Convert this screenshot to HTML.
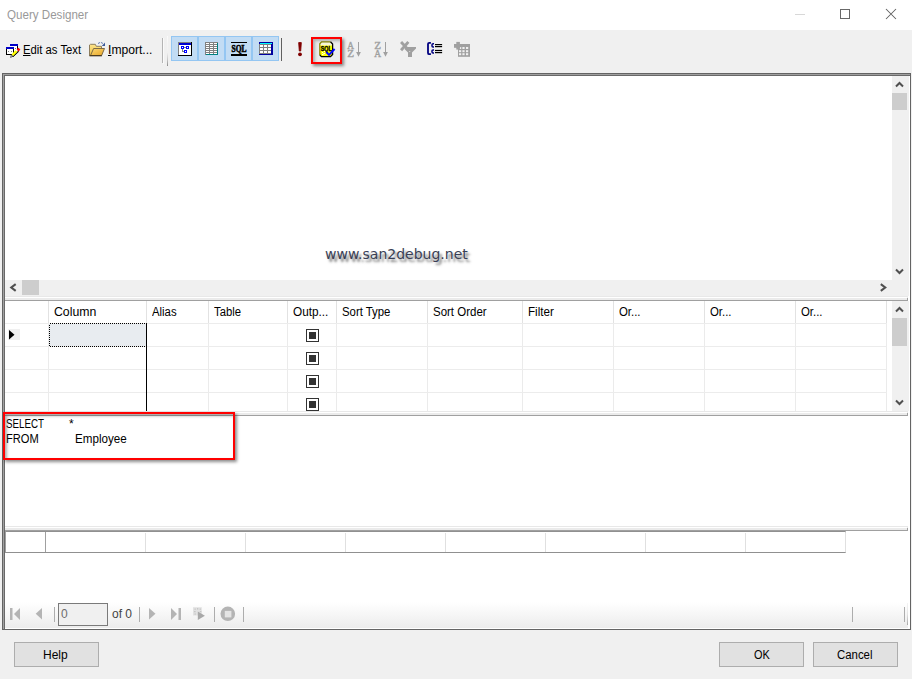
<!DOCTYPE html>
<html><head><meta charset="utf-8"><title>Query Designer</title>
<style>
*{box-sizing:border-box;margin:0;padding:0}
html,body{width:912px;height:679px;overflow:hidden;background:#f0f0f0}
body{position:relative;font-family:"Liberation Sans",sans-serif;font-size:12px;color:#000}
.a{position:absolute}
.t{position:absolute;white-space:nowrap;line-height:14px;height:14px;transform-origin:0 50%}
svg{position:absolute;overflow:visible}
.px{shape-rendering:crispEdges}
#title{left:0;top:0;width:912px;height:30px;background:#fff}
.btn{position:absolute;height:25px;top:642px;width:85px;background:#e1e1e1;border:1px solid #adadad}
.vl{position:absolute;width:1px;background:linear-gradient(#e2e2e2 0,#e2e2e2 22px,#ebebeb 22px)}
.hl{position:absolute;height:1px;background:#ececec}
.sep{position:absolute;width:1px;background:#adadad}
</style></head><body>
<!-- TITLE BAR -->
<div id="title" class="a"></div>
<div class="t" id="t_title" style="left:7px;top:8px;color:#999;transform:scaleX(0.966)">Query Designer</div>
<svg class="px" style="left:790px;top:0" width="122" height="30">
<rect x="5" y="14" width="10" height="1" fill="#d8d8d8"/>
<rect x="50.5" y="9.5" width="9" height="9" fill="none" stroke="#686868" stroke-width="1"/>
</svg>
<svg style="left:885px;top:8px" width="12" height="12"><path d="M1 1 L11 11 M11 1 L1 11" stroke="#606060" stroke-width="1.05" fill="none"/></svg>

<!-- TOOLBAR -->
<svg class="px" style="left:6px;top:43px" width="15" height="15">
<rect x="4" y="1" width="8" height="8" fill="#fff"/><rect x="4" y="1" width="8" height="2" fill="#0000c8"/><rect x="11" y="3" width="1" height="3" fill="#000"/>
<rect x="0" y="4" width="8" height="8" fill="#fff"/><rect x="0" y="4" width="8" height="2" fill="#0000c8"/><rect x="0" y="6" width="1" height="6" fill="#000"/><rect x="0" y="11" width="6" height="1" fill="#000"/><rect x="7" y="6" width="1" height="4" fill="#000"/>
<rect x="2" y="8" width="1" height="1" fill="#808080"/><rect x="5" y="8" width="1" height="1" fill="#808080"/><rect x="9" y="5" width="1" height="1" fill="#808080"/>
</svg>
<svg style="left:6px;top:43px" width="16" height="16">
<path d="M7.3 13.6 L12.6 8.6 L11.5 8.8 L7 13 Z" fill="#000" stroke="#000" stroke-width=".9"/>
<path d="M5.5 11.6 L9.4 7.2 L11.5 8.8 L7.3 13 Z" fill="#ff0"/>
<path d="M10.6 6.2 L12.6 4.7 L14.4 6.7 L12.3 8.6 Z" fill="#f00"/>
<path d="M5.4 11.8 L7 13.3 L4.6 14.4 Z" fill="#fff" stroke="#000" stroke-width=".6"/>
</svg>
<div class="t" id="tb_edit" style="left:23px;top:43px;font-size:12px;transform:scaleX(0.94)"><u>E</u>dit as Text</div>
<svg style="left:88px;top:40px" width="19" height="18">
<defs><linearGradient id="fg1" x1="0" y1="0" x2="0" y2="1"><stop offset="0" stop-color="#fde58c"/><stop offset="1" stop-color="#f0c040"/></linearGradient>
<linearGradient id="fg2" x1="0" y1="0" x2="1" y2="1"><stop offset="0" stop-color="#fdd975"/><stop offset="1" stop-color="#e7a526"/></linearGradient></defs>
<path d="M1.5 15.5 L1.5 5 L2.5 4.3 L7.3 4.3 L8.3 6.3 L13.5 6.3 L13.5 15.5 Z" fill="url(#fg1)" stroke="#8d7d5c" stroke-width="1"/>
<path d="M2.5 15.5 L5.6 8.5 L16.5 8.5 L13.6 15.5 Z" fill="url(#fg2)" stroke="#7d6a45" stroke-width="1"/>
<path d="M1.5 15.8 L13.8 15.8" stroke="#3a2a10" stroke-width="1"/>
<path d="M10 3.6 Q13 1.2 15.6 4.2" fill="none" stroke="#5a78b0" stroke-width="1" stroke-dasharray="2.2 1"/>
<path d="M17 2.6 L17 5.9 L13.8 5.9 Z" fill="#3a5a9a"/>
</svg>
<div class="t" id="tb_imp" style="left:108px;top:43px;font-size:12px;transform:scaleX(1.01)"><u>I</u>mport...</div>
<div class="a" style="left:162px;top:38px;width:1px;height:25px;background:#b4b4b4"></div><div class="a" style="left:163px;top:38px;width:1px;height:26px;background:#fafafa"></div><div class="a" style="left:167px;top:36px;width:1px;height:30px;background:linear-gradient(#fafafa 0%,#f0f0f0 55%,#c4c4c4 80%,#8c8c8c 100%)"></div>
<div class="a" style="left:281px;top:38px;width:1px;height:23px;background:#606060"></div>
<div class="a" style="left:171px;top:36px;width:27px;height:25px;background:#c2dcf4;border:1px solid #94c6f2"></div>
<div class="a" style="left:198px;top:36px;width:27px;height:25px;background:#c2dcf4;border:1px solid #94c6f2"></div>
<div class="a" style="left:225px;top:36px;width:27px;height:25px;background:#c2dcf4;border:1px solid #94c6f2"></div>
<div class="a" style="left:252px;top:36px;width:27px;height:25px;background:#c2dcf4;border:1px solid #94c6f2"></div>
<svg class="px" style="left:178px;top:42px" width="14" height="14">
<rect x="0" y="0" width="14" height="14" fill="#000"/><rect x="0" y="0" width="13" height="13" fill="#808080"/><rect x="1" y="1" width="12" height="12" fill="#fff"/>
<rect x="1" y="1" width="12" height="2" fill="#0000d0"/>
<rect x="5" y="5" width="3" height="1" fill="#808080"/><rect x="4" y="6" width="1" height="4" fill="#808080"/><rect x="4" y="9" width="3" height="1" fill="#808080"/>
<rect x="3" y="4" width="3" height="3" fill="#00f"/><rect x="4" y="5" width="1" height="1" fill="#fff"/>
<rect x="8" y="4" width="3" height="3" fill="#00f"/><rect x="9" y="5" width="1" height="1" fill="#fff"/>
<rect x="6" y="8" width="3" height="3" fill="#00f"/><rect x="7" y="9" width="1" height="1" fill="#fff"/>
</svg>
<svg class="px" style="left:205px;top:42px" width="13" height="13">
<rect x="0" y="0" width="13" height="13" fill="#808080"/><rect x="12" y="1" width="1" height="12" fill="#008080"/><rect x="1" y="12" width="12" height="1" fill="#008080"/><rect x="1" y="1" width="3" height="1" fill="#fff"/><rect x="1" y="3" width="3" height="1" fill="#fff"/><rect x="1" y="5" width="3" height="1" fill="#fff"/><rect x="1" y="7" width="3" height="1" fill="#fff"/><rect x="1" y="9" width="3" height="1" fill="#fff"/><rect x="1" y="11" width="3" height="1" fill="#fff"/><rect x="5" y="1" width="3" height="1" fill="#fff"/><rect x="5" y="3" width="3" height="1" fill="#fff"/><rect x="5" y="5" width="3" height="1" fill="#fff"/><rect x="5" y="7" width="3" height="1" fill="#fff"/><rect x="5" y="9" width="3" height="1" fill="#fff"/><rect x="5" y="11" width="3" height="1" fill="#fff"/><rect x="9" y="1" width="3" height="1" fill="#fff"/><rect x="9" y="3" width="3" height="1" fill="#fff"/><rect x="9" y="5" width="3" height="1" fill="#fff"/><rect x="9" y="7" width="3" height="1" fill="#fff"/><rect x="9" y="9" width="3" height="1" fill="#fff"/><rect x="9" y="11" width="3" height="1" fill="#fff"/>
</svg>
<svg style="left:231px;top:41px" width="16" height="16"><rect class="px" x="0" y="1" width="16" height="1" fill="#000"/><rect class="px" x="0" y="13" width="16" height="2" fill="#000"/>
<text x="8" y="11" text-anchor="middle" font-family="Liberation Serif, serif" font-weight="bold" font-size="10" textLength="15" lengthAdjust="spacingAndGlyphs" fill="#000" stroke="#000" stroke-width=".6">SQL</text></svg>
<svg class="px" style="left:259px;top:42px" width="14" height="13">
<rect x="0" y="0" width="14" height="13" fill="#0000a0"/><rect x="1" y="1" width="12" height="1" fill="#0ff"/><rect x="0" y="2" width="12" height="10" fill="#808080"/><rect x="1" y="3" width="3" height="2" fill="#fff"/><rect x="1" y="6" width="3" height="2" fill="#fff"/><rect x="1" y="9" width="3" height="2" fill="#fff"/><rect x="5" y="3" width="3" height="2" fill="#fff"/><rect x="5" y="6" width="3" height="2" fill="#fff"/><rect x="5" y="9" width="3" height="2" fill="#fff"/><rect x="9" y="3" width="3" height="2" fill="#fff"/><rect x="9" y="6" width="3" height="2" fill="#fff"/><rect x="9" y="9" width="3" height="2" fill="#fff"/>
</svg>
<svg style="left:296px;top:41px" width="8" height="17"><path d="M2.7 1.6 L5.3 1.6 L4.7 10 L3.3 10 Z" fill="#800000" stroke="#800000" stroke-width=".9" stroke-linejoin="round"/><circle cx="4" cy="13.3" r="1.9" fill="#800000"/></svg>
<div class="a" style="left:311px;top:37px;width:31px;height:27px;background:#ececec;border:2px solid #f00;box-shadow:2px 2px 3px rgba(0,0,0,.45), inset 2px 2px 3px rgba(60,60,60,.35)"></div>
<svg style="left:319px;top:41px" width="17" height="17">
<path d="M2.5 1 L11.5 1 L13.5 3 L13.5 13.5 L11.5 15.5 L2.5 15.5 L0.8 13.8 L0.8 2.8 Z" fill="#ffff00"/>
<path d="M2.5 1 L11.5 1 L13.4 2.8 L13.4 4.6 L1 4.6 L1 2.8 Z" fill="#f6f6d8"/>
<g fill="#fff"><rect x="3" y="9" width="1" height="1"/><rect x="5" y="10" width="1" height="1"/><rect x="3" y="11" width="1" height="1"/><rect x="5" y="12" width="1" height="1"/><rect x="3" y="13" width="1" height="1"/><rect x="6" y="8.5" width="1" height="1"/><rect x="4" y="12.5" width="1" height="1"/></g>
<path d="M0.8 14 L0.8 2.8 L2.5 0.8 L11.5 0.8" fill="none" stroke="#808000" stroke-width="1.2"/>
<path d="M11.5 0.8 L13.6 3 L13.6 13.5 L11.5 15.6 L2.5 15.6 L0.8 14" fill="none" stroke="#000" stroke-width="1.3"/>
<text x="7.3" y="9.6" text-anchor="middle" font-family="Liberation Sans, sans-serif" font-weight="bold" font-size="6.5" textLength="11" lengthAdjust="spacingAndGlyphs" fill="#000" stroke="#000" stroke-width=".35">SQL</text>
<path d="M7.2 11.2 L10 14 L15.6 8" fill="none" stroke="#0000ff" stroke-width="1.9"/>
</svg>
<svg style="left:347px;top:41px" width="16" height="17">
<text x="0.2" y="7.7" textLength="6.8" lengthAdjust="spacingAndGlyphs" font-family="Liberation Serif, serif" font-size="9.4" fill="#a0a0a0" stroke="#a0a0a0" stroke-width=".35">A</text>
<text x="0.2" y="15.6" textLength="6.8" lengthAdjust="spacingAndGlyphs" font-family="Liberation Serif, serif" font-size="9.4" fill="#a0a0a0" stroke="#a0a0a0" stroke-width=".35">Z</text>
<rect x="11" y="1" width="1" height="11" fill="#a0a0a0"/><path d="M9.1 11 L13.9 11 L11.5 15.8 Z" fill="#a0a0a0"/></svg>
<svg style="left:374px;top:41px" width="16" height="17">
<text x="0.2" y="7.7" textLength="6.8" lengthAdjust="spacingAndGlyphs" font-family="Liberation Serif, serif" font-size="9.4" fill="#a0a0a0" stroke="#a0a0a0" stroke-width=".35">Z</text>
<text x="0.2" y="15.6" textLength="6.8" lengthAdjust="spacingAndGlyphs" font-family="Liberation Serif, serif" font-size="9.4" fill="#a0a0a0" stroke="#a0a0a0" stroke-width=".35">A</text>
<rect x="11" y="1" width="1" height="11" fill="#a0a0a0"/><path d="M9.1 11 L13.9 11 L11.5 15.8 Z" fill="#a0a0a0"/></svg>
<svg style="left:400px;top:41px" width="17" height="17">
<path d="M2 2 L9 9.5 M7.4 2 L2 8.2" stroke="#a0a0a0" stroke-width="2.8" stroke-linecap="square" fill="none"/>
<path d="M6 6 L16 6 L16 7.6 L12 11.4 L12 16 L8 16 L8 11.4 L4.5 8 Z" fill="#a0a0a0"/>
<rect x="9.2" y="10" width="1" height="1" fill="#dcdcdc"/>
</svg>
<svg style="left:427px;top:42px" width="16" height="14">
<path d="M3.9 0.8 L2.3 0.8 Q1 0.8 1 2.1 L1 10.9 Q1 12.2 2.3 12.2 L3.9 12.2" fill="none" stroke="#000080" stroke-width="1.8"/>
<path d="M7 1.8 L6 1.8 Q5 1.8 5 2.7 L5 4 Q5 4.9 6 4.9 L7 4.9" fill="none" stroke="#000080" stroke-width="1.5"/>
<path d="M7 7.9 L6 7.9 Q5 7.9 5 8.8 L5 10.1 Q5 11 6 11 L7 11" fill="none" stroke="#000080" stroke-width="1.5"/>
<g fill="#000"><rect x="8" y="2" width="7.1" height="1.2"/><rect x="8" y="4" width="7.1" height="1.2"/><rect x="8" y="7.9" width="7.1" height="1.2"/><rect x="8" y="10" width="7.1" height="1.2"/></g>
</svg>
<svg style="left:454px;top:41px" width="17" height="17">
<rect x="4" y="3" width="12" height="12.8" fill="#a0a0a0"/><rect x="5" y="6" width="2.2" height="2" fill="#f0f0f0"/><rect x="5" y="9.2" width="2.2" height="2" fill="#f0f0f0"/><rect x="5" y="12.2" width="2.2" height="2" fill="#f0f0f0"/><rect x="8.4" y="6" width="2.2" height="2" fill="#f0f0f0"/><rect x="8.4" y="9.2" width="2.2" height="2" fill="#f0f0f0"/><rect x="8.4" y="12.2" width="2.2" height="2" fill="#f0f0f0"/><rect x="12" y="6" width="2.2" height="2" fill="#f0f0f0"/><rect x="12" y="9.2" width="2.2" height="2" fill="#f0f0f0"/><rect x="12" y="12.2" width="2.2" height="2" fill="#f0f0f0"/>
<rect x="0" y="3" width="6.2" height="3.8" fill="#a0a0a0"/><rect x="2.3" y="0.9" width="3.6" height="7.7" fill="#a0a0a0"/>
</svg>

<!-- MAIN PANE FRAME -->
<div class="a" style="left:2px;top:73px;width:909px;height:557px;background:#646464"></div>
<div class="a" style="left:3px;top:74px;width:907px;height:555px;background:#a0a0a0"></div>
<div class="a" style="left:4px;top:75px;width:906px;height:554px;background:#696969"></div>
<div class="a" style="left:2px;top:73px;width:909px;height:557px;border-right:1px solid #646464;border-bottom:1px solid #646464"></div>
<div class="a" style="left:5px;top:76px;width:905px;height:553px;background:#fff"></div>
<!-- diagram pane scrollbars -->
<div class="a" style="left:892px;top:76px;width:17px;height:220px;background:#f0f0f0"></div>
<div class="a" style="left:5px;top:280px;width:904px;height:16px;background:#f0f0f0"></div>
<div class="a" style="left:892px;top:93px;width:15px;height:17px;background:#cdcdcd"></div>
<div class="a" style="left:22px;top:280px;width:17px;height:15px;background:#cdcdcd"></div>
<svg style="left:892px;top:76px" width="17" height="17"><path d="M4 10.5 L7.5 7 L11 10.5" stroke="#505050" stroke-width="2" fill="none"/></svg>
<svg style="left:892px;top:263px" width="17" height="17"><path d="M4 6.5 L7.5 10 L11 6.5" stroke="#505050" stroke-width="2" fill="none"/></svg>
<svg style="left:5px;top:280px" width="17" height="16"><path d="M10.7 4.2 L6.3 7.5 L10.7 10.8" stroke="#505050" stroke-width="2.1" fill="none"/></svg>
<svg style="left:875px;top:280px" width="17" height="16"><path d="M5.8 4.2 L10.2 7.5 L5.8 10.8" stroke="#505050" stroke-width="2.1" fill="none"/></svg>
<!-- watermark -->
<div class="t" id="t_wm" style="left:325px;top:247px;font-family:'DejaVu Sans',sans-serif;font-size:14px;color:#3a3f55;text-shadow:2.5px 2.5px 2.5px rgba(30,30,30,.6)">www.san2debug.net</div>
<!-- splitter 1 -->
<div class="a" style="left:5px;top:296px;width:903px;height:5px;background:#ebebeb"></div><div class="a" style="left:5px;top:296px;width:903px;height:1px;background:#e8e8e8"></div><div class="a" style="left:5px;top:297px;width:902px;height:1px;background:#fff"></div><div class="a" style="left:5px;top:300px;width:903px;height:1px;background:#a0a0a0"></div><div class="a" style="left:907px;top:298px;width:1px;height:3px;background:#a0a0a0"></div>
<!-- GRID PANE 301..410 -->
<div class="vl" style="left:48px;top:301px;height:110px"></div>
<div class="vl" style="left:146px;top:301px;height:110px"></div>
<div class="vl" style="left:208px;top:301px;height:110px"></div>
<div class="vl" style="left:287px;top:301px;height:110px"></div>
<div class="vl" style="left:336px;top:301px;height:110px"></div>
<div class="vl" style="left:427px;top:301px;height:110px"></div>
<div class="vl" style="left:522px;top:301px;height:110px"></div>
<div class="vl" style="left:613px;top:301px;height:110px"></div>
<div class="vl" style="left:704px;top:301px;height:110px"></div>
<div class="vl" style="left:795px;top:301px;height:110px"></div>
<div class="vl" style="left:886px;top:301px;height:110px"></div>
<div class="hl" style="left:5px;top:323px;width:882px"></div>
<div class="hl" style="left:5px;top:346px;width:882px"></div>
<div class="hl" style="left:5px;top:369px;width:882px"></div>
<div class="hl" style="left:5px;top:392px;width:882px"></div>
<div class="t" id="h_col" style="left:54px;top:305px;transform:scaleX(1.024)">Column</div>
<div class="t" id="h_alias" style="left:152px;top:305px;transform:scaleX(0.946)">Alias</div>
<div class="t" id="h_table" style="left:214px;top:305px;transform:scaleX(0.94)">Table</div>
<div class="t" id="h_out" style="left:293px;top:305px;transform:scaleX(0.98)">Outp...</div>
<div class="t" id="h_st" style="left:342px;top:305px;transform:scaleX(0.947)">Sort Type</div>
<div class="t" id="h_so" style="left:433px;top:305px;transform:scaleX(0.957)">Sort Order</div>
<div class="t" id="h_f" style="left:528px;top:305px;transform:scaleX(0.97)">Filter</div>
<div class="t" id="h_or1" style="left:619px;top:305px;transform:scaleX(0.95)">Or...</div>
<div class="t" id="h_or2" style="left:710px;top:305px;transform:scaleX(0.95)">Or...</div>
<div class="t" id="h_or3" style="left:801px;top:305px;transform:scaleX(0.95)">Or...</div>
<div class="a" style="left:306px;top:329px;width:13px;height:13px;border:1px solid #333;background:#fff"></div><div class="a" style="left:309px;top:332px;width:7px;height:7px;background:#333"></div>
<div class="a" style="left:306px;top:352px;width:13px;height:13px;border:1px solid #333;background:#fff"></div><div class="a" style="left:309px;top:355px;width:7px;height:7px;background:#333"></div>
<div class="a" style="left:306px;top:375px;width:13px;height:13px;border:1px solid #333;background:#fff"></div><div class="a" style="left:309px;top:378px;width:7px;height:7px;background:#333"></div>
<div class="a" style="left:306px;top:398px;width:13px;height:13px;border:1px solid #333;background:#fff"></div><div class="a" style="left:309px;top:401px;width:7px;height:7px;background:#333"></div>
<div class="a" style="left:49px;top:324px;width:97px;height:22px;background:#e8ecf0"></div>
<svg class="px" style="left:49px;top:323px" width="98" height="24"><rect x="0.5" y="0.5" width="97" height="23" fill="none" stroke="#000" stroke-width="1" stroke-dasharray="1 1"/></svg>
<div class="a" style="left:146px;top:323px;width:1px;height:88px;background:#000"></div>
<div class="a" style="left:8px;top:329px;width:12px;height:11px;background:#f0f0f0"></div>
<svg style="left:9px;top:330px" width="8" height="10"><path d="M0 0 L5.5 4.7 L0 9.4 Z" fill="#000"/></svg>
<div class="a" style="left:892px;top:301px;width:17px;height:110px;background:#f0f0f0"></div>
<div class="a" style="left:892px;top:318px;width:15px;height:28px;background:#cdcdcd"></div>
<svg style="left:892px;top:301px" width="17" height="17"><path d="M4 10.5 L7.5 7 L11 10.5" stroke="#505050" stroke-width="2" fill="none"/></svg>
<svg style="left:892px;top:394px" width="17" height="17"><path d="M4 6.5 L7.5 10 L11 6.5" stroke="#505050" stroke-width="2" fill="none"/></svg>
<!-- splitter 2 -->
<div class="a" style="left:5px;top:411px;width:903px;height:5px;background:#ebebeb"></div><div class="a" style="left:5px;top:411px;width:903px;height:1px;background:#e8e8e8"></div><div class="a" style="left:5px;top:412px;width:902px;height:1px;background:#fff"></div><div class="a" style="left:5px;top:415px;width:903px;height:1px;background:#a0a0a0"></div><div class="a" style="left:907px;top:413px;width:1px;height:3px;background:#a0a0a0"></div>
<!-- SQL PANE 416..525 -->
<div class="t" id="s_sel" style="left:6px;top:417px;transform:scaleX(0.815)">SELECT</div>
<div class="t" id="s_star" style="left:69px;top:417px">*</div>
<div class="t" id="s_from" style="left:6px;top:432px;transform:scaleX(0.927)">FROM</div>
<div class="t" id="s_emp" style="left:75px;top:432px;transform:scaleX(0.968)">Employee</div>
<div class="a" style="left:3px;top:412px;width:232px;height:48px;border:2px solid #f00;box-shadow:2px 2px 3px rgba(0,0,0,.45), inset 2px 2px 3px rgba(60,60,60,.4)"></div>
<!-- splitter 3 -->
<div class="a" style="left:5px;top:526px;width:903px;height:5px;background:#ebebeb"></div><div class="a" style="left:5px;top:526px;width:903px;height:1px;background:#e8e8e8"></div><div class="a" style="left:5px;top:527px;width:902px;height:1px;background:#fff"></div><div class="a" style="left:5px;top:530px;width:903px;height:1px;background:#a0a0a0"></div><div class="a" style="left:907px;top:528px;width:1px;height:3px;background:#a0a0a0"></div>
<!-- RESULT PANE 531..627 -->
<div class="a" style="left:5px;top:531px;width:841px;height:22px;background:#fff;border-left:1px solid #a0a0a0;border-right:1px solid #d4d4d4;border-top:1px solid #909090;border-bottom:1px solid #909090"></div>
<div class="a" style="left:45px;top:532px;width:1px;height:20px;background:#a0a0a0"></div>
<div class="a" style="left:145px;top:533px;width:1px;height:19px;background:#e0e0e0"></div>
<div class="a" style="left:245px;top:533px;width:1px;height:19px;background:#e0e0e0"></div>
<div class="a" style="left:345px;top:533px;width:1px;height:19px;background:#e0e0e0"></div>
<div class="a" style="left:445px;top:533px;width:1px;height:19px;background:#e0e0e0"></div>
<div class="a" style="left:545px;top:533px;width:1px;height:19px;background:#e0e0e0"></div>
<div class="a" style="left:645px;top:533px;width:1px;height:19px;background:#e0e0e0"></div>
<div class="a" style="left:745px;top:533px;width:1px;height:19px;background:#e0e0e0"></div>
<div class="a" style="left:845px;top:533px;width:1px;height:19px;background:#e0e0e0"></div>
<div class="a" style="left:5px;top:602px;width:903px;height:26px;background:linear-gradient(#ffffff,#f6f6f6 50%,#ececec)"></div>
<div class="sep" style="left:54px;top:607px;height:15px"></div>
<div class="sep" style="left:139px;top:607px;height:15px"></div>
<div class="sep" style="left:214px;top:607px;height:15px"></div>
<div class="sep" style="left:243px;top:607px;height:15px"></div>
<div class="sep" style="left:852px;top:607px;height:15px"></div>
<div class="sep" style="left:904px;top:607px;height:15px"></div>
<div class="a" style="left:907px;top:603px;width:1px;height:22px;background:linear-gradient(#f4f4f4 0%,#e4e4e4 50%,#a8a8a8 100%)"></div>
<div class="a" style="left:58px;top:603px;width:50px;height:23px;border:1px solid #7a7a7a;background:#f0f0f0"></div>
<div class="t" id="n_0" style="left:61px;top:607px;color:#6d6d6d">0</div>
<div class="t" id="n_of" style="left:112px;top:607px;color:#444">of 0</div>
<svg style="left:5px;top:602px" width="250" height="26">
<rect x="5" y="6" width="2.5" height="12" fill="#b4b4b4"/><path d="M15 6 L15 18 L9 12 Z" fill="#b4b4b4"/>
<path d="M37 6 L37 17.5 L30.7 11.8 Z" fill="#b4b4b4"/>
<path d="M144 6 L144 17.5 L150.5 11.8 Z" fill="#b4b4b4"/>
<path d="M166 6 L166 18 L172 12 Z" fill="#b4b4b4"/><rect x="173.5" y="6" width="2.5" height="12" fill="#b4b4b4"/>
<rect x="188" y="5.2" width="8.8" height="8.3" fill="#e2e2e2"/>
<g fill="#c6c6c6"><rect x="189.5" y="6.5" width="1.3" height="1.3"/><rect x="192" y="6" width="1.3" height="1.6"/><rect x="194.6" y="6.5" width="1.3" height="1.3"/><rect x="189" y="9" width="1.6" height="1.3"/><rect x="194.8" y="9" width="1.6" height="1.3"/><rect x="189.5" y="11.4" width="1.3" height="1.3"/></g>
<path d="M192.8 9.4 L192.8 18.1 L199.9 13.75 Z" fill="#a8a8a8"/>
<circle cx="222.8" cy="11.8" r="7.3" fill="#b4b4b4"/><rect x="219.8" y="8.9" width="6.6" height="6.5" fill="#e4e4e4"/>
</svg>

<!-- BOTTOM BUTTONS -->
<div class="btn" style="left:14px"></div>
<div class="btn" style="left:719px"></div>
<div class="btn" style="left:813px"></div>
<div class="t" id="t_help" style="left:43px;top:648px">Help</div>
<div class="t" id="t_ok" style="left:753.5px;top:648px;transform:scaleX(0.91)">OK</div>
<div class="t" id="t_cancel" style="left:837px;top:648px;transform:scaleX(0.95)">Cancel</div>
</body></html>
